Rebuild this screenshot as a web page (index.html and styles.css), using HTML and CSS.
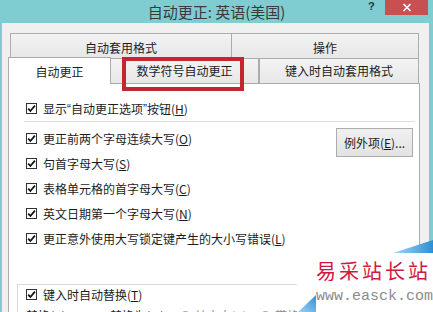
FILE: index.html
```html
<!DOCTYPE html>
<html lang="zh-CN">
<head>
<meta charset="utf-8">
<title>自动更正: 英语(美国)</title>
<link rel="stylesheet" href="styles.css">
</head>
<body>
<div class="titlebar">
  <div class="title">自动更正: 英语(美国)</div>
  <div class="controls">
    <span class="help">?</span>
    <span class="close"><svg width="10" height="9" viewBox="0 0 10 9"><path d="M1.5 1 L8.5 8 M8.5 1 L1.5 8" stroke="#fff" stroke-width="1.6" fill="none"/></svg></span>
  </div>
</div>
<div class="dialog">
  <div class="tabrow tabrow-top">
    <div class="tab tab-wide">自动套用格式</div>
    <div class="tab tab-fill">操作</div>
  </div>
  <div class="tabrow tabrow-bottom">
    <div class="tab tab-active">自动更正</div>
    <div class="tab tab-math"><span class="highlight">数学符号自动更正</span></div>
    <div class="tab tab-fill tab-last">键入时自动套用格式</div>
  </div>
  <div class="panel">
    <div class="row"><span class="cb"><svg width="9" height="9" viewBox="0 0 9 9"><path d="M1.2 4.6 L3.4 7 L7.9 1.6" stroke="#111" stroke-width="1.7" fill="none"/></svg></span>显示<span class="q">“</span>自动更正选项<span class="q">”</span>按钮(<u>H</u>)</div>
    <div class="sep"></div>
    <div class="block">
      <div class="rows">
        <div class="row"><span class="cb"><svg width="9" height="9" viewBox="0 0 9 9"><path d="M1.2 4.6 L3.4 7 L7.9 1.6" stroke="#111" stroke-width="1.7" fill="none"/></svg></span>更正前两个字母连续大写(<u>O</u>)</div>
        <div class="row"><span class="cb"><svg width="9" height="9" viewBox="0 0 9 9"><path d="M1.2 4.6 L3.4 7 L7.9 1.6" stroke="#111" stroke-width="1.7" fill="none"/></svg></span>句首字母大写(<u>S</u>)</div>
        <div class="row"><span class="cb"><svg width="9" height="9" viewBox="0 0 9 9"><path d="M1.2 4.6 L3.4 7 L7.9 1.6" stroke="#111" stroke-width="1.7" fill="none"/></svg></span>表格单元格的首字母大写(<u>C</u>)</div>
        <div class="row"><span class="cb"><svg width="9" height="9" viewBox="0 0 9 9"><path d="M1.2 4.6 L3.4 7 L7.9 1.6" stroke="#111" stroke-width="1.7" fill="none"/></svg></span>英文日期第一个字母大写(<u>N</u>)</div>
        <div class="row"><span class="cb"><svg width="9" height="9" viewBox="0 0 9 9"><path d="M1.2 4.6 L3.4 7 L7.9 1.6" stroke="#111" stroke-width="1.7" fill="none"/></svg></span>更正意外使用大写锁定键产生的大小写错误(<u>L</u>)</div>
      </div>
      <div class="btn">例外项(<u>E</u>)...</div>
    </div>
    <div class="group">
      <div class="legend"><span class="cb"><svg width="9" height="9" viewBox="0 0 9 9"><path d="M1.2 4.6 L3.4 7 L7.9 1.6" stroke="#111" stroke-width="1.7" fill="none"/></svg></span>键入时自动替换(<u>T</u>)</div>
      <div class="replace-row">
        <span class="lbl lbl-r">替换(<u>R</u>):</span>
        <span class="lbl lbl-w">替换为(<u>W</u>):</span>
        <span class="radio radio-on"></span>
        <span class="opt opt-plain">纯文本(<u>P</u>)</span>
        <span class="radio"></span>
        <span class="opt">带格式文本(<u>F</u>)</span>
      </div>
    </div>
  </div>
</div>
<div class="watermark">
  <svg class="wm-bg" width="140" height="75" viewBox="0 0 140 75">
    <defs>
      <linearGradient id="g1" x1="0" y1="0" x2="1" y2="0">
        <stop offset="0" stop-color="#a9d9f2"/>
        <stop offset="1" stop-color="#2b8fd6"/>
      </linearGradient>
      <linearGradient id="g2" x1="0" y1="1" x2="1" y2="0">
        <stop offset="0" stop-color="#9fd3f0"/>
        <stop offset="1" stop-color="#2e92d8"/>
      </linearGradient>
    </defs>
    <rect x="4" y="16" width="136" height="59" fill="#ffffff"/>
    <polygon points="100,16 140,16 140,3" fill="url(#g1)"/>
    <polygon points="5,75 23,75 23,58" fill="url(#g2)"/>
  </svg>
  <div class="wm-cn">易采站长站</div>
  <div class="wm-url">www.easck.com</div>
</div>
</body>
</html>
```
FILE: styles.css
```css
* { box-sizing: border-box; }
html, body { margin: 0; height: 312px; overflow: hidden; }
body {
  background: #7fcdd0;
  font-family: "Noto Sans CJK SC", "Noto Sans", sans-serif;
  font-size: 12px;
  color: #1c1c1c;
  position: relative;
}
u { text-decoration-thickness: 1px; text-underline-offset: 1px; }
.q { font-family: "Liberation Sans", sans-serif; }

.titlebar {
  display: grid;
  grid-template-columns: 1fr auto 1fr;
  height: 23px;
}
.title {
  grid-column: 2;
  font-size: 15px;
  line-height: 23px;
  color: #3a3a3a;
}
.controls {
  grid-column: 3;
  justify-self: end;
  display: flex;
  align-items: flex-start;
  margin-right: 5px;
}
.help {
  width: 17px;
  font: bold 11px/13px "Liberation Sans", sans-serif;
  color: #21393f;
}
.close {
  width: 43px;
  height: 15px;
  background: #c75050;
  display: flex;
  align-items: center;
  justify-content: center;
}

.dialog {
  margin: 0 4px 0 2px;
  background: #f0f0f0;
  padding: 10px 9px 0 6px;
  height: 289px;
}

.tabrow { display: flex; }
.tabrow-top { margin: 0 1px 0 2px; height: 25px; }
.tabrow-bottom { margin-right: 1px; height: 25px; align-items: flex-start; }

.tab {
  border: 1px solid #acacac;
  border-bottom: none;
  background: linear-gradient(#f3f3f3, #e7e7e7);
  display: flex;
  align-items: center;
  justify-content: center;
  color: #1c1c1c;
  line-height: 16px;
}
.tabrow-top .tab { height: 25px; padding-top: 4px; }
.tab-wide { width: 222px; }
.tabrow-top .tab-fill { border-left: none; }
.tab-fill { flex: 1; }
.tabrow-bottom .tab { height: 25px; }
.tab-active {
  width: 103px;
  height: 27px !important;
  margin-top: -1px;
  background: #ffffff;
  position: relative;
  z-index: 1;
  padding-top: 2px;
}
.tab-math { width: 148px; border-left: none; position: relative; }
.tab-last { border-left: 1px solid #acacac; }
.highlight { position: relative; }
.highlight::before {
  content: "";
  position: absolute;
  left: -14px;
  right: -11px;
  top: -6px;
  bottom: -12px;
  border: 4px solid #c3262e;
}

.panel {
  background: #ffffff;
  border: 1px solid #acacac;
  height: 240px;
  padding: 12px 6px 0 17px;
}

.row {
  display: flex;
  align-items: center;
  height: 25px;
  line-height: 16px;
  white-space: nowrap;
}
.cb {
  width: 11px;
  height: 11px;
  border: 1px solid #333;
  background: #fff;
  margin-right: 6px;
  display: flex;
  align-items: center;
  justify-content: center;
  flex: none;
}
.cb svg { display: block; }

.sep {
  height: 1px;
  background: #dcdcdc;
  margin: 0 -2px 4px -2px;
}

.block { display: flex; justify-content: space-between; align-items: flex-start; }
.btn {
  margin-top: 2px;
  width: 77px;
  height: 29px;
  border: 1px solid #acacac;
  background: linear-gradient(#f0f0f0, #e3e3e3);
  display: flex;
  align-items: center;
  justify-content: center;
  line-height: 16px;
}

.group {
  margin: 33px 0 0 -9px;
  border-top: 1px solid #d9d9d9;
  border-left: 1px solid #d9d9d9;
  width: 390px;
  height: 60px;
  padding-left: 6px;
}
.legend {
  display: inline-flex;
  align-items: center;
  background: #fff;
  height: 14px;
  margin-top: -2px;
  padding: 0 6px 0 2px;
  line-height: 14px;
}
.replace-row {
  display: flex;
  align-items: center;
  height: 14px;
  margin-top: 7px;
  padding-left: 2px;
  line-height: 14px;
  white-space: nowrap;
}
.lbl-r { width: 84px; }
.lbl-w { width: 70px; }
.radio {
  width: 11px;
  height: 11px;
  border: 1px solid #a0a0a0;
  border-radius: 50%;
  background: #f4f4f4;
  margin-right: 4px;
  flex: none;
  display: flex;
  align-items: center;
  justify-content: center;
}
.radio-on::after {
  content: "";
  width: 5px;
  height: 5px;
  border-radius: 50%;
  background: #6a6a6a;
}
.opt { color: #8a8a8a; }
.opt-plain { width: 65px; }

.watermark {
  position: absolute;
  left: 293px;
  top: 237px;
  width: 140px;
  height: 75px;
  padding: 22px 0 0 23px;
}
.wm-bg { position: absolute; left: 0; top: 0; }
.wm-cn {
  position: relative;
  font-size: 20px;
  line-height: 23px;
  letter-spacing: 3px;
  color: #d01942;
  white-space: nowrap;
}
.wm-url {
  position: relative;
  margin-top: 9px;
  font: 15px/12px "Liberation Mono", monospace;
  color: #8c8c8c;
  white-space: nowrap;
}
```
